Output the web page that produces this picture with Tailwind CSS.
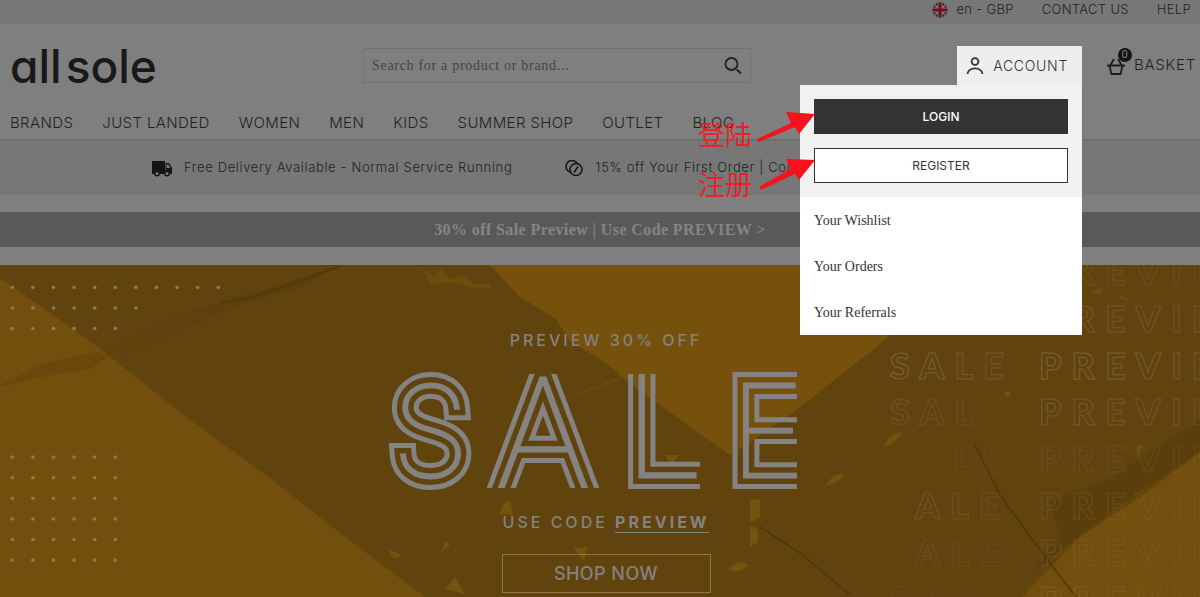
<!DOCTYPE html>
<html lang="en">
<head>
    <meta charset="UTF-8">
    <meta name="viewport" content="width=device-width, initial-scale=1.0">
    <title>AllSole</title>
    <script src="https://cdn.jsdelivr.net/npm/@tailwindcss/browser@4"></script>
</head>
<body class="relative flex min-h-screen flex-col overflow-x-hidden bg-[#7f7f7f] font-['Inter','Liberation_Sans',sans-serif] text-[#1f1f1f]">

    <!-- Top bar -->
    <div class="flex h-6 items-center justify-end gap-7 bg-[#777777] pr-[9px] pb-1 text-[13px] font-light tracking-wide">
        <a href="#" class="flex items-center gap-2">
            <svg class="size-4" viewBox="0 0 16 16" aria-hidden="true">
                <clipPath id="flagClip"><circle cx="8" cy="8" r="7.5"/></clipPath>
                <g clip-path="url(#flagClip)">
                    <rect width="16" height="16" fill="#1c1c40"/>
                    <path d="M0 0L16 16M16 0L0 16" stroke="#858080" stroke-width="1.5"/>
                    <path d="M8 0V16M0 8H16" stroke="#858080" stroke-width="5"/>
                    <path d="M8 0V16M0 8H16" stroke="#70101c" stroke-width="3"/>
                </g>
            </svg>
            <span>en - GBP</span>
        </a>
        <a href="#">CONTACT US</a>
        <a href="#">HELP</a>
    </div>

    <!-- Header -->
    <header class="border-b-2 border-[#6e6e6e]">
        <div class="flex h-[83px] items-center justify-between pr-1 pl-[10px]">
            <a href="#" class="flex w-[353px] items-center gap-1 text-[46px] leading-[60px] font-medium text-[#191919] [font-feature-settings:'cv11','ss01']">
                <span>all</span><span>sole</span>
            </a>
            <form class="flex h-[35px] max-w-[388px] flex-1 items-center border border-[#727272]">
                <input type="text" aria-label="Search" placeholder="Search for a product or brand..." class="h-full min-w-0 flex-1 px-2 font-['Liberation_Serif',serif] text-sm tracking-wider outline-none placeholder:text-[#444444]">
                <button type="submit" class="px-2" aria-label="Search">
                    <svg class="size-[18px]" viewBox="0 0 18 18" fill="none" stroke="#202020" stroke-width="1.8">
                        <circle cx="7.5" cy="7" r="6"/>
                        <path d="M12.8 12.500L17 16.500" stroke-width="2.2"/>
                    </svg>
                </button>
            </form>
            <div class="ml-auto flex items-center gap-6">
                <div class="relative z-10">
                    <button type="button" class="flex h-[39px] items-center gap-[9px] bg-[#eeeeee] px-[9px] pr-[14px] text-sm font-light tracking-wider text-[#333333]">
                        <svg class="size-[18px]" viewBox="0 0 18 18" fill="none" stroke="#333" stroke-width="1.8">
                            <circle cx="9" cy="4.5" r="3.4"/>
                            <path d="M1.500 17C2.500 9.500 15.500 9.500 16.500 17"/>
                        </svg>
                        ACCOUNT
                    </button>
                    <!-- Account menu -->
                    <div class="absolute top-full right-0 w-[282px] bg-white text-[#333333]">
                        <div class="flex flex-col gap-[14px] bg-[#f1f1f1] p-[14px]">
                            <a href="#" class="flex h-[35px] items-center justify-center bg-[#333333] text-xs font-medium text-white">LOGIN</a>
                            <a href="#" class="flex h-[35px] items-center justify-center border border-[#333333] bg-white text-xs">REGISTER</a>
                        </div>
                        <nav class="flex flex-col font-['Liberation_Serif',serif] text-sm">
                            <a href="#" class="flex h-[46px] items-center px-[14px] pt-[2px]">Your Wishlist</a>
                            <a href="#" class="flex h-[46px] items-center px-[14px] pt-[2px]">Your Orders</a>
                            <a href="#" class="flex h-[46px] items-center px-[14px] pt-[2px]">Your Referrals</a>
                        </nav>
                    </div>
                </div>
                <a href="#" class="flex items-center gap-2 text-[15px] font-light tracking-wider">
                    <span class="relative">
                        <svg class="size-5" viewBox="0 0 20 20" fill="none" stroke="#1c1c1c" stroke-width="1.8">
                            <path d="M1 9.500H19M3.500 10L5.500 18H14.500L16.500 10M4.500 9L8 3M15.500 9L12 3"/>
                        </svg>
                        <span class="absolute -top-2 left-3 flex size-[14px] items-center justify-center rounded-full bg-[#151515] text-[10px] font-normal text-[#8a8a8a]">0</span>
                    </span>
                    BASKET
                </a>
            </div>
        </div>
        <nav class="flex h-8 items-center gap-[29px] px-[10px] text-[15px] font-light tracking-wide">
            <a href="#">BRANDS</a>
            <a href="#">JUST LANDED</a>
            <a href="#">WOMEN</a>
            <a href="#">MEN</a>
            <a href="#">KIDS</a>
            <a href="#">SUMMER SHOP</a>
            <a href="#">OUTLET</a>
            <a href="#">BLOG</a>
        </nav>
    </header>

    <!-- Delivery and discount strip -->
    <div class="flex h-[54px] items-center gap-[53px] overflow-hidden bg-[#777777] pl-[152px] text-[13px] font-light tracking-wider whitespace-nowrap">
        <a href="#" class="flex items-center gap-3">
            <svg class="size-5" viewBox="0 0 20 20" aria-hidden="true">
                <path d="M0 3H13V16H0ZM13.500 5H17L20 9.500V16H13.500Z" fill="#151515"/>
                <path d="M14.500 6.500H16.500L18.300 10H14.500Z" fill="#777"/>
                <circle cx="5" cy="15.500" r="2.300" fill="#777" stroke="#151515" stroke-width="1.400"/>
                <circle cx="15" cy="15.500" r="2.300" fill="#777" stroke="#151515" stroke-width="1.400"/>
            </svg>
            Free Delivery Available - Normal Service Running
        </a>
        <a href="#" class="flex items-center gap-3">
            <svg class="size-[18px]" viewBox="0 0 18 18" fill="none" stroke="#151515" stroke-width="1.6">
                <circle cx="7" cy="7.500" r="6"/>
                <circle cx="11" cy="10.500" r="6" fill="#777"/>
                <path d="M9 13.500L13 7.500"/>
            </svg>
            15% off Your First Order | Code
        </a>
    </div>

    <!-- Sale strip -->
    <a href="#" class="mt-[17px] mb-[18px] flex h-[35px] items-center justify-center bg-[#595959] font-['Liberation_Serif',serif] text-base font-bold tracking-wide text-[#858585]">30% off Sale Preview | Use Code PREVIEW &gt;</a>

    <!-- Hero banner -->
    <main class="relative flex flex-1 flex-col items-center overflow-hidden bg-[#61430d] pt-[63px] text-[#858282]">
        <svg class="absolute inset-0 size-full" viewBox="0 0 1200 332" preserveAspectRatio="xMidYMin slice" aria-hidden="true">
            <defs>
                <pattern id="dots" x="2" y="12" width="20.6" height="20.6" patternUnits="userSpaceOnUse">
                    <circle cx="10.300" cy="10.300" r="1.8" fill="#937b50"/>
                </pattern>
                <linearGradient id="shade" x1="0" y1="0" x2="0" y2="1">
                    <stop offset="0" stop-color="#573b0b"/>
                    <stop offset="1" stop-color="#573b0b" stop-opacity="0"/>
                </linearGradient>
                <linearGradient id="fade" x1="0" y1="0" x2="1" y2="0">
                    <stop offset="0" stop-color="#866c42" stop-opacity="0.8"/>
                    <stop offset="1" stop-color="#866c42" stop-opacity="0.4"/>
                </linearGradient>
            </defs>

            <!-- Folded paper -->
            <path d="M0 13L60 55L103 86L190 155L270 213L340 268L425 332H0Z" fill="#724f0d"/>
            <path d="M490 0L520 32L556 54L570 76L605 97L630 119L730 190L790 150L885 75L960 0Z" fill="#75510c"/>
            <path d="M1200 187L1140 232L1080 272L1022 332H1200Z" fill="#724f0d"/>
            <path d="M0 120L45 98L97 87L108 92L90 104L60 108L0 122Z" fill="#69480b"/>
            <path d="M103 86L160 57L220 36L280 20L340 0L300 22L240 40L170 70L125 94Z" fill="url(#shade)" opacity="0.7"/>
            <path d="M220 38L245 34L290 20L340 1" fill="none" stroke="#533809" stroke-width="1.500"/>
            <path d="M1050 236L1110 214L1160 180L1200 156V187L1140 226L1080 270L1030 310L1060 270Z" fill="#593d0c" opacity="0.7"/>
            <path d="M975 180L1000 230L1040 285L1076 332M760 262L800 288L850 330" fill="none" stroke="#513608" stroke-width="1.500"/>
            <path d="M575 130L600 121L622 112" fill="none" stroke="#6b4b10" stroke-width="2"/>

            <!-- Fallen leaves -->
            <g fill="#74530f">
                <path d="M883 183Q888 169 903 167Q896 178 883 183ZM826 221Q833 206 845 210Q838 218 826 221ZM750 235L760 234V253L750 257ZM750 262Q759 259 758 277L750 282ZM728 304Q740 293 748 300Q740 310 728 304ZM502 240L510 235L513 250L500 249ZM573 283L588 282L584 296ZM665 190L679 190L671 200ZM442 287L450 280L445 276ZM445 324L455 312L465 329ZM388 284L402 290L394 294ZM1137 182L1142 181L1138 193ZM1005 127H1010V131H1005Z"/>
                <path d="M420 2L435 12L440 3L452 14L465 10L475 20L488 18L492 24L470 22L450 17L432 20ZM1090 26L1105 22L1100 30ZM1115 28L1132 36L1120 34Z" opacity="0.6"/>
            </g>

            <!-- Dot grids -->
            <path d="M2 12H228.600V32.600H146.200V53.200H125.600V73.800H2Z" fill="url(#dots)"/>
            <rect x="2" y="176.800" width="123.600" height="123.600" fill="url(#dots)" transform="translate(0 5)"/>

            <!-- Outlined word pattern -->
            <g fill="none" stroke="url(#fade)" stroke-width="1" font-family="Lato, sans-serif" font-weight="900" font-size="36" letter-spacing="10">
                <text x="1039" y="20" opacity="0.5">PREVIEW</text>
                <text x="1039" y="67" opacity="0.8">PREVIEW</text>
                <text x="890" y="114">SALE</text><text x="1039" y="114">PREVIEW</text>
                <text x="890" y="160" opacity="0.6">SAL</text><text x="1039" y="160" opacity="0.8">PREVIEW</text>
                <text x="954" y="207" opacity="0.3">LE</text><text x="1039" y="207" opacity="0.4">PREVIEW</text>
                <text x="915" y="254" opacity="0.6">ALE</text><text x="1039" y="254" opacity="0.5">PREVIEW</text>
                <text x="915" y="301" opacity="0.4">ALE</text><text x="1039" y="301" opacity="0.5">PREVIEW</text>
                <text x="890" y="348" opacity="0.2">SALE</text><text x="1039" y="348" opacity="0.6">PREVIEW</text>
            </g>
        </svg>

        <div class="relative flex flex-col items-center pl-3">
            <p class="text-base font-medium tracking-[3px]">PREVIEW 30% OFF</p>
            <!-- Triple line lettering: the mask cuts two gaps out of one thick stroke and opens the stroke ends -->
            <svg class="mt-4 h-[130px] w-[440px]" viewBox="0 0 440 130" fill="none" font-family="Inter, sans-serif" font-weight="100" font-size="126" stroke-miterlimit="3">
                <mask id="lines" maskUnits="userSpaceOnUse" x="0" y="0" width="440" height="130">
                    <rect width="440" height="130" fill="#fff"/>
                    <g aria-hidden="true">
                        <text y="109" stroke="#000" stroke-width="14"><tspan x="6">S</tspan><tspan x="109" y="119" font-size="150">A</tspan><tspan x="238" y="109" font-size="142">L</tspan><tspan x="344" font-size="128">E</tspan></text>
                        <text y="109" stroke="#fff" fill="#fff" stroke-width="3"><tspan x="6">S</tspan><tspan x="109" y="119" font-size="150">A</tspan><tspan x="238" y="109" font-size="142">L</tspan><tspan x="344" font-size="128">E</tspan></text>
                    </g>
                    <path d="M90 0H290V6H90ZM90 120H230V130H90ZM314 80H330V130H314ZM411 0H440V130H411Z" fill="#000"/>
                </mask>
                <text y="109" stroke="#858282" fill="#858282" stroke-width="24" mask="url(#lines)"><tspan x="6">S</tspan><tspan x="109" y="119" font-size="150">A</tspan><tspan x="238" y="109" font-size="142">L</tspan><tspan x="344" font-size="128">E</tspan></text>
            </svg>
            <p class="mt-3 text-base font-medium tracking-[3px]">USE CODE <span class="border-b border-[#858282] font-bold">PREVIEW</span></p>
            <a href="#" class="mt-5 flex h-[39px] w-[209px] items-center justify-center border border-[#8c7850] text-lg leading-6 font-medium tracking-wide">SHOP NOW</a>
        </div>
    </main>

    <!-- Annotations over the page -->
    <div class="pointer-events-none absolute top-[109px] left-[698px] z-20 font-['Noto_Sans_CJK_SC',sans-serif] text-[27px] leading-[50px] text-[#e8222a]" lang="zh">
        <p>登陆</p>
        <p>注册</p>
        <svg class="absolute top-0 left-[58px] h-[90px] w-[60px]" viewBox="0 0 60 90" fill="#f5121d" aria-hidden="true">
            <path d="M59 5L43 25L39 18L3 33L1 30L35 14L30 3Z"/>
            <path d="M59 51L43 71L39 65L5 81L3 78L34 60L30 50Z"/>
        </svg>
    </div>
</body>
</html>
